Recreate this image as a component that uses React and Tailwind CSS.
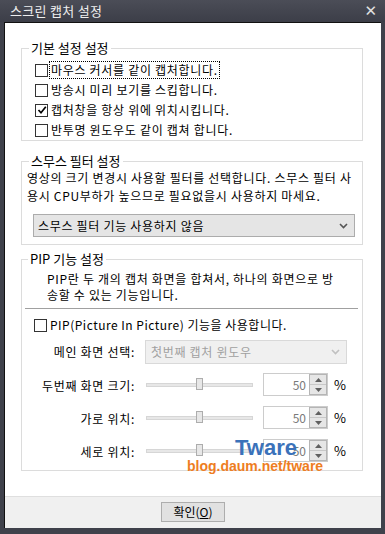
import React from 'react';

const FONT = { fontFamily: "'Noto Sans CJK KR', 'Noto Sans', sans-serif" };

const CheckBox = ({ checked }) => (
  <span className="w-[13px] h-[13px] border border-[#333333] bg-white flex items-center justify-center shrink-0">
    {checked && (
      <svg width="10" height="10" viewBox="0 0 10 10">
        <path d="M1.5 5 L4 7.8 L8.8 1.8" stroke="#000" strokeWidth="1.7" fill="none" />
      </svg>
    )}
  </span>
);

const Chevron = ({ color }) => (
  <svg width="9" height="6" viewBox="0 0 9 6">
    <path d="M1 1 L4.5 4.5 L8 1" stroke={color} strokeWidth="1.6" fill="none" />
  </svg>
);

const Triangle = ({ up }) => (
  <svg width="7" height="4" viewBox="0 0 7 4">
    <path d={up ? 'M0 4 L3.5 0 L7 4 Z' : 'M0 0 L3.5 4 L7 0 Z'} fill="#606060" />
  </svg>
);

const SliderRow = ({ label }) => (
  <div className="flex items-center h-[23px]">
    <div className="w-[113px] text-right text-[12px] leading-[16px] tracking-[0.7px] pt-[2px]">{label}</div>
    <div className="relative w-[107px] h-[4px] ml-[11px] bg-[#e7e7e7] border border-[#d6d6d6]">
      <div className="absolute left-[49px] top-[-6px] w-[7px] h-[12px] bg-[#e7e7e7] border border-[#adadad]" />
    </div>
    <div className="ml-[10px] w-[65px] h-[23px] border border-[#cccccc] bg-white flex">
      <div className="flex-1 text-right pr-[3px] text-[12px] leading-[21px] text-[#7a7a7a]">50</div>
      <div className="w-[18px] flex flex-col border border-[#b5b5b5] bg-[#e6e6e6]">
        <div className="flex-1 flex items-center justify-center border-b border-[#c8c8c8]">
          <Triangle up />
        </div>
        <div className="flex-1 flex items-center justify-center">
          <Triangle />
        </div>
      </div>
    </div>
    <span className="ml-[6px] text-[13px] leading-[16px]">%</span>
  </div>
);

const App = () => {
  const options = [
    { text: '마우스 커서를 같이 캡처합니다.', checked: false, focus: true },
    { text: '방송시 미리 보기를 스킵합니다.', checked: false },
    { text: '캡처창을 항상 위에 위치시킵니다.', checked: true },
    { text: '반투명 윈도우도 같이 캡쳐 합니다.', checked: false },
  ];

  return (
    <div className="w-[385px] h-[534px] bg-[#3f414b] flex flex-col text-black" style={FONT}>
      {/* title bar */}
      <div className="h-[22px] flex items-center justify-between pl-[10px] pr-[8px] bg-gradient-to-b from-[#4b4d57] to-[#3c3e48]">
        <span className="text-[13px] leading-[16px] tracking-[0.3px] text-[#eeeeee]">스크린 캡처 설정</span>
        <span className="text-[15px] leading-[16px] font-bold text-[#e0e0e0]" style={{ fontFamily: "'DejaVu Sans', sans-serif" }}>✕</span>
      </div>

      {/* client area */}
      <div className="relative ml-[4px] w-[377px] h-[506px] border-l border-t border-[#111111] bg-white flex flex-col">
        <div className="flex-1 px-[16px]">
          {/* group 1 */}
          <fieldset className="mt-[17px] w-[342px] border border-[#dcdcdc] pb-0">
            <legend className="ml-[7px] px-[2px] text-[13px] leading-[16px]">기본 설정 설정</legend>
            <div className="pt-[4px]">
              {options.map((o) => (
                <div key={o.text} className="h-[20px] flex items-center pl-[13px]">
                  <CheckBox checked={o.checked} />
                  <span
                    className={`ml-[2px] px-[1px] text-[12px] leading-[16px] tracking-[0.7px] ${o.focus ? 'outline outline-1 outline-dotted outline-black' : ''}`}
                  >
                    {o.text}
                  </span>
                </div>
              ))}
            </div>
          </fieldset>

          {/* group 2 */}
          <fieldset className="mt-[12px] w-[342px] border border-[#dcdcdc] pb-[7px]">
            <legend className="ml-[7px] px-[2px] text-[13px] leading-[16px]">스무스 필터 설정</legend>
            <p className="pl-[5px] pr-[4px] text-[12px] leading-[18px] tracking-[0.7px] break-all">
              영상의 크기 변경시 사용할 필터를 선택합니다. 스무스 필터 사용시 CPU부하가 높으므로 필요없을시 사용하지 마세요.
            </p>
            <div className="mt-[9px] ml-[11px] w-[322px] h-[23px] bg-[#e5e5e5] border border-[#acacac] flex items-center justify-between pl-[4px] pr-[6px]">
              <span className="text-[12px] leading-[16px] tracking-[0.7px]">스무스 필터 기능 사용하지 않음</span>
              <Chevron color="#555555" />
            </div>
          </fieldset>

          {/* group 3 */}
          <fieldset className="mt-[6px] w-[342px] border border-[#dcdcdc] pb-[8px]">
            <legend className="ml-[6px] px-[2px] text-[13px] leading-[16px]">PIP 기능 설정</legend>
            <p className="pt-[4px] pl-[25px] pr-[24px] text-[12px] leading-[16px] tracking-[0.7px] break-all">
              PIP란 두 개의 캡처 화면을 합쳐서, 하나의 화면으로 방송할 수 있는 기능입니다.
            </p>
            <div className="mt-[5px] ml-[3px] w-[333px] h-px bg-[#a0a0a0]" />
            <div className="mt-[6px] h-[20px] flex items-center pl-[12px]">
              <CheckBox />
              <span className="ml-[3px] text-[12px] leading-[16px] tracking-[0.5px]">PIP(Picture In Picture) 기능을 사용합니다.</span>
            </div>
            <div className="mt-[5px] flex items-center h-[24px]">
              <div className="w-[113px] text-right text-[12px] leading-[16px] tracking-[0.7px]">메인 화면 선택:</div>
              <div className="ml-[10px] w-[202px] h-[24px] bg-[#f0f0f0] border border-[#d9d9d9] flex items-center justify-between pl-[5px] pr-[6px]">
                <span className="text-[12px] leading-[16px] tracking-[0.7px] text-[#a0a0a0]">첫번째 캡처 윈도우</span>
                <Chevron color="#c0c0c0" />
              </div>
            </div>
            <div className="mt-[9px] flex flex-col gap-[10px]">
              <SliderRow label="두번째 화면 크기:" />
              <SliderRow label="가로 위치:" />
              <SliderRow label="세로 위치:" />
            </div>
          </fieldset>
        </div>

        {/* watermark */}
        <div
          className="absolute left-[230px] top-[414px] text-[22px] leading-none font-bold text-[#3b72ba]"
          style={{ fontFamily: "'Liberation Sans', Arial, sans-serif" }}
        >
          Tware
        </div>
        <div
          className="absolute left-[182px] top-[436px] text-[14px] leading-none font-bold text-[#ee7d22]"
          style={{ fontFamily: "'Liberation Sans', Arial, sans-serif" }}
        >
          blog.daum.net/tware
        </div>

        {/* footer */}
        <div className="h-[32px] bg-[#f0f0f0] border-t border-[#dfdfdf] flex justify-center pt-[5px]">
          <button className="w-[64px] h-[20px] bg-[#e1e1e1] border border-[#adadad] text-[12px] leading-[16px]">
            확인(<span className="underline">O</span>)
          </button>
        </div>
      </div>
    </div>
  );
};

export default App;
